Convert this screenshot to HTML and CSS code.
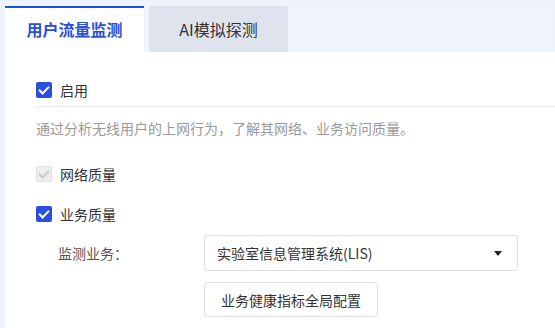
FILE: index.html
```html
<!DOCTYPE html>
<html lang="zh">
<head>
<meta charset="utf-8">
<link rel="stylesheet" href="styles.css">
</head>
<body>
<div class="frame">
  <div class="tabs">
    <div class="tab active">用户流量监测</div>
    <div class="tab">AI模拟探测</div>
  </div>
  <div class="panel">
    <label class="check row-enable"><span class="box on"></span><span>启用</span></label>
    <div class="divider"></div>
    <p class="desc">通过分析无线用户的上网行为，了解其网络、业务访问质量。</p>
    <label class="check row-net"><span class="box disabled"></span><span>网络质量</span></label>
    <label class="check row-biz"><span class="box on"></span><span>业务质量</span></label>
    <div class="field">
      <span class="field-label">监测业务：</span>
      <div class="select"><span>实验室信息管理系统(LIS)</span><span class="caret"></span></div>
    </div>
    <div class="actions"><button class="btn">业务健康指标全局配置</button></div>
  </div>
</div>
</body>
</html>
```
FILE: styles.css
```css
* { box-sizing: border-box; }
html, body { margin: 0; padding: 0; }
body {
  background: #eef2f9;
  font-family: "Noto Sans CJK SC", "Noto Sans", sans-serif;
  color: #333;
  width: 555px;
  height: 328px;
  overflow: hidden;
}
.frame {
  padding: 2px 2px 0 5px;
}
.tabs {
  display: flex;
  align-items: flex-end;
  gap: 5px;
  height: 50px;
  background: #eff3fb;
}
.tab {
  width: 139px;
  height: 46px;
  display: flex;
  align-items: center;
  justify-content: center;
  font-size: 16px;
  color: #333;
  background: #dfe3ee;
  border-radius: 3px 3px 0 0;
}
.tab.active {
  background: #fff;
  color: #2a4fd6;
  font-weight: bold;
  border-top: 2px solid #1f4fe0;
  border-radius: 0;
  padding-bottom: 2px;
}
.panel {
  background: #fff;
  padding: 28px 0 0 31px;
  height: 276px;
  margin-right: -2px;
}
.check {
  display: flex;
  align-items: center;
  gap: 8px;
  height: 20px;
  font-size: 14px;
  color: #333;
}
.box {
  width: 16px;
  height: 16px;
  border-radius: 2px;
  position: relative;
  flex: none;
}
.box.on { background: #2a4fe0; }
.box.disabled { background: #eeeeee; border: 1px solid #e2e2e2; }
.box::after {
  content: "";
  position: absolute;
  left: 5px;
  top: 2px;
  width: 4px;
  height: 8px;
  border: solid #fff;
  border-width: 0 2px 2px 0;
  transform: rotate(45deg);
}
.box.disabled::after { border-color: #c8c8c8; left: 4px; top: 1px; }
.divider { height: 1px; background: #e8ecf2; margin-top: 6px; }
.desc {
  margin: 11px 0 0;
  line-height: 20px;
  font-size: 14px;
  color: #9a9a9a;
}
.row-net { margin-top: 26px; }
.row-biz { margin-top: 20px; }
.field {
  display: flex;
  align-items: center;
  margin-top: 11px;
}
.field-label {
  width: 168px;
  padding-left: 22px;
  font-size: 14px;
  color: #555;
}
.select {
  width: 314px;
  height: 36px;
  border: 1px solid #dcdfe6;
  border-radius: 3px;
  display: flex;
  align-items: center;
  justify-content: space-between;
  padding: 0 15px 0 12px;
  font-size: 14px;
  color: #333;
}
.caret {
  width: 0; height: 0;
  border-left: 4px solid transparent;
  border-right: 4px solid transparent;
  border-top: 5px solid #222;
}
.actions { padding-left: 168px; margin-top: 11px; }
.btn {
  height: 35px;
  padding: 0 16px;
  white-space: nowrap;
  border: 1px solid #dcdfe6;
  border-radius: 3px;
  background: #fff;
  font-family: inherit;
  font-size: 14px;
  color: #333;
}
```
